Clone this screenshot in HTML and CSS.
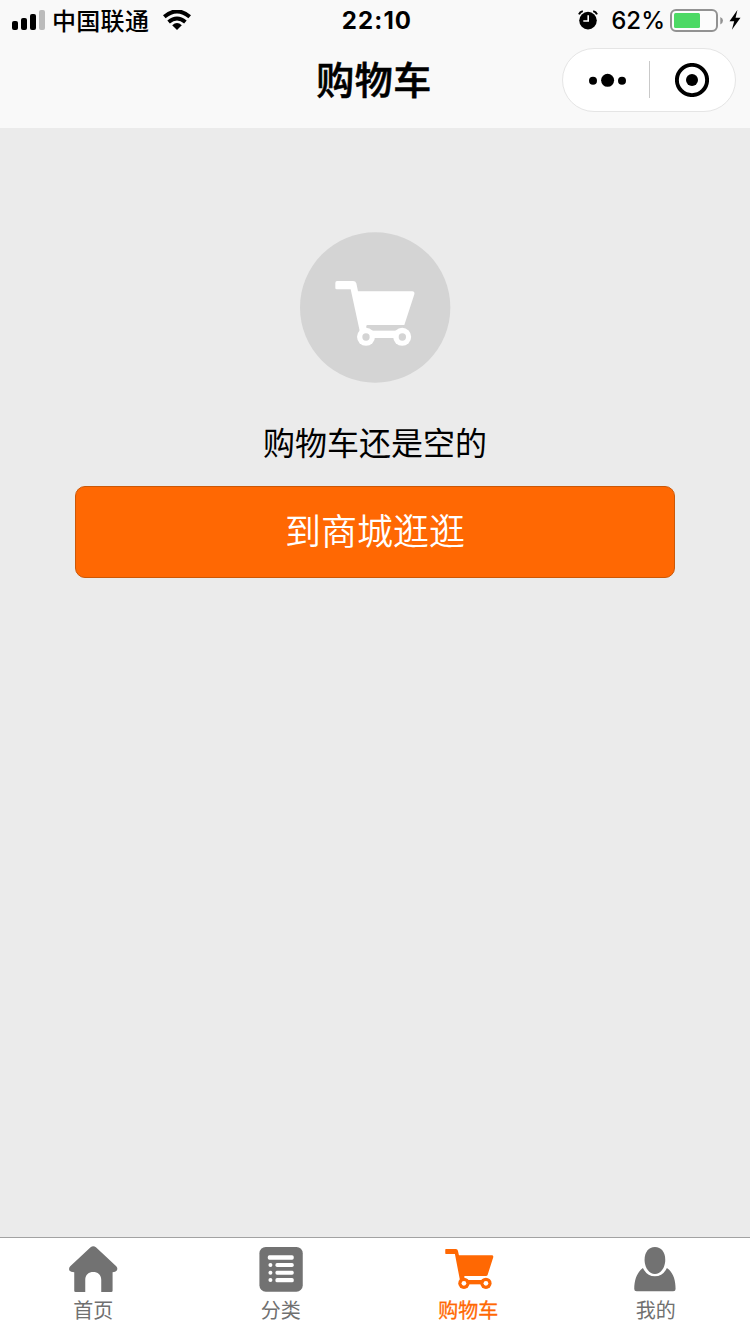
FILE: index.html
```html
<!DOCTYPE html>
<html lang="zh-CN">
<head>
<meta charset="utf-8">
<title>购物车</title>
<link rel="stylesheet" href="styles.css">
</head>
<body>
<div class="app">
  <header class="header">
    <div class="status">
      <div class="status-left">
        <svg class="signal" viewBox="0 0 34 20" width="34" height="20">
          <rect x="0" y="11" width="6" height="9" rx="2"/>
          <rect x="9" y="8" width="6" height="12" rx="2"/>
          <rect x="18" y="4" width="6" height="16" rx="2"/>
          <rect x="27" y="0" width="6" height="20" rx="2" fill="#bbb"/>
        </svg>
        <span class="carrier">中国联通</span>
        <svg class="wifi" viewBox="0 0 28 20" width="28" height="20">
          <path d="M1.3 6.8Q14-4 26.7 6.8" fill="none" stroke="#000" stroke-width="4"/>
          <path d="M5.6 12Q14 4.8 22.4 12" fill="none" stroke="#000" stroke-width="3.9"/>
          <path d="M9.2 15.2Q14 10.8 18.8 15.2L14 20Z"/>
        </svg>
      </div>
      <div class="time">22:10</div>
      <div class="status-right">
        <svg class="alarm" viewBox="0 0 20 20" width="20" height="20">
          <circle cx="10" cy="10.6" r="8.8"/>
          <path d="M1 4.3Q2 1.8 4.8 1.1M19 4.3Q18 1.8 15.2 1.1" fill="none" stroke="#000" stroke-width="2"/>
          <path d="M10.2 5.2V11H5.3" fill="none" stroke="#fff" stroke-width="1.6"/>
        </svg>
        <span class="percent">62%</span>
        <svg class="battery" viewBox="0 0 54 24" width="54" height="24">
          <rect x="1" y="2" width="46" height="21" rx="5" fill="#fcfcfc" stroke="#929292" stroke-width="2"/>
          <rect x="4" y="5" width="26" height="15" rx="1.5" fill="#4cd964"/>
          <path d="M50.3 9Q53 10 53 12.5T50.3 16.500Z" fill="#929292"/>
        </svg>
        <svg class="bolt" viewBox="0 0 12 20" width="12" height="20">
          <path d="M8.4 0L.5 11.2H5.2L2.9 19.8L11.5 7.8H6.6Z"/>
        </svg>
      </div>
    </div>
    <div class="nav">
      <h1 class="title">购物车</h1>
      <div class="capsule">
        <svg class="more" viewBox="0 0 38 14" width="38" height="14">
          <circle cx="4" cy="7.7" r="4"/><circle cx="18.6" cy="7.3" r="6.5"/><circle cx="33" cy="7.7" r="4"/>
        </svg>
        <span class="divider"></span>
        <svg class="close" viewBox="0 0 34 34" width="34" height="34">
          <circle cx="17" cy="17" r="15.1" fill="none" stroke="#000" stroke-width="3.9"/><circle cx="17" cy="17" r="6"/>
        </svg>
      </div>
    </div>
  </header>

  <main class="content">
    <svg class="empty-icon" viewBox="29 26 453 456" width="151" height="152">
      <circle cx="254.500" cy="255.500" r="225.500" fill="#d4d4d4"/>
      <g fill="#fff">
        <path d="M140 176H188Q196 176 198 183L203 207H366Q374 208 372 216L342 308H231Q226 309 228 314L227 344L208 325L181 201H139Q135 201 135 197V182Q135 176 140 176Z"/>
        <rect x="240" y="325" width="84" height="22"/>
        <circle cx="227" cy="343.500" r="27"/>
        <circle cx="335.500" cy="343.500" r="27"/>
      </g>
      <circle cx="227" cy="344" r="11" fill="#d4d4d4"/>
      <circle cx="336" cy="344" r="11" fill="#d4d4d4"/>
    </svg>
    <p class="empty-text">购物车还是空的</p>
    <button class="shop-button" type="button"><span class="shop-label">到商城逛逛</span></button>
  </main>

  <nav class="tabs">
    <a class="tab">
      <svg viewBox="41.25 24 180 168" width="60" height="56">
        <path d="M121 52Q129 45 137 52L198 109Q204 116 199 122Q196 126 187 127V182Q187 186 183 186H153V150C153 134 142 126 129 126S105 134 105 150V186H76Q72 186 72 182V127Q61 126 58 122Q54 116 60 109Z"/>
      </svg>
      <span>首页</span>
    </a>
    <a class="tab">
      <svg viewBox="45.75 24 180 168" width="60" height="56">
        <rect x="71" y="51" width="130" height="134" rx="19"/>
        <g fill="#fff"><rect x="96" y="76" width="78" height="13" rx="5"/>
        <rect x="119" y="99" width="55" height="12" rx="5"/><rect x="119" y="122" width="55" height="12" rx="5"/><rect x="119" y="144" width="55" height="13" rx="5"/>
        <circle cx="104" cy="105" r="6"/><circle cx="104" cy="128" r="6"/><circle cx="104" cy="150" r="6"/></g>
      </svg>
      <span>分类</span>
    </a>
    <a class="tab active">
      <svg viewBox="47.25 24 180 168" width="60" height="56">
        <path d="M68 57H98Q103 57 104 62L107 76H207Q211 77 210 82L193 135Q192 138 188 138H124Q122 141 124 144L122 160L110 150L95 72H68Q66 72 66 70V59Q66 57 68 57Z"/>
        <rect x="132" y="150" width="46" height="13"/>
        <circle cx="122" cy="160" r="17"/><circle cx="188" cy="160" r="17"/>
        <circle cx="122" cy="160" r="7" fill="#fff"/><circle cx="188" cy="160" r="7" fill="#fff"/>
      </svg>
      <span>购物车</span>
    </a>
    <a class="tab">
      <svg viewBox="47.25 24 180 168" width="60" height="56">
        <path d="M134 51C153 51 165 67 165 89C165 113 151 132 134 132S103 113 103 89C103 67 115 51 134 51Z"/>
        <path d="M98 114Q110 139 134 139T170 114C188 126 196 149 196 177Q196 184 189 184H79Q72 184 72 177C72 149 81 126 98 114Z"/>
      </svg>
      <span>我的</span>
    </a>
  </nav>
</div>
</body>
</html>
```
FILE: styles.css
```css
* { box-sizing: border-box; }
body { margin: 0; font-family: "Noto Sans CJK SC", sans-serif; color: #000; }
svg { display: block; flex: none; }
.app { width: 750px; height: 1334px; display: flex; flex-direction: column; background: #ebebeb; }
.header { height: 128px; background: #f9f9f9; }
.status { height: 40px; display: grid; grid-template: 40px / 1fr auto 1fr; align-items: center; }
.status-left, .status-right { display: flex; align-items: center; height: 40px; }
.status-left { padding-left: 12px; }
.carrier { font-size: 24px; line-height: 40px; font-weight: 500; margin-left: 6px; letter-spacing: 0.3px; }
.wifi { margin-left: 14px; }
.time { font: 700 24px/38px Inter, sans-serif; letter-spacing: 1.1px; padding: 2px 0 0 4px; }
.status-right { justify-content: flex-end; padding-right: 9px; }
.percent { font: 500 24px/38px Inter, sans-serif; margin: 0 6px 0 13px; padding-top: 2px; }
.battery { margin-right: 4px; margin-left: -1px; }
.bolt { margin-left: 1px; }
.nav { height: 88px; display: grid; grid-template-columns: 1fr auto 1fr; align-items: start; }
.title { grid-column: 2; margin: 7px 0 0; padding-right: 2px; font-size: 38px; line-height: 62px; font-weight: 500; letter-spacing: 0.5px; -webkit-text-stroke: 0.6px #000; }
.capsule { justify-self: end; width: 174px; height: 64px; margin: 8px 14px 0 0; padding: 0 26px 1px 25px; border: 1px solid #e5e5e5; border-radius: 32px; background: #fff; display: flex; align-items: center; }
.more { margin-left: 1px; }
.divider { width: 1px; height: 37px; background: #c9c9c9; margin: 0 25px 0 22px; }
.content { flex: 1; display: flex; flex-direction: column; align-items: center; padding-top: 103px; }
.empty-text { margin: 34px 0 21px; font-size: 32px; line-height: 48px; }
.shop-button { width: 600px; height: 92px; padding: 0 0 4px; border: 1px solid #cb5807; border-radius: 10px; background: #ff6803; color: #fff; font: 350 36px/80px "Noto Sans CJK SC", sans-serif; }
.shop-label { display: block; margin-top: -2px; }
.tabs { height: 97px; border-top: 1px solid #a2a2a2; background: #fff; display: grid; grid-template-columns: repeat(4, 1fr); }
.tab { display: flex; flex-direction: column; align-items: center; color: #707070; fill: #727272; font-size: 20px; line-height: 32px; }
.tab span { padding-right: 1px; }
.active { color: #ff6803; fill: #ff6803; -webkit-text-stroke: 0.3px #ff6803; }
```
